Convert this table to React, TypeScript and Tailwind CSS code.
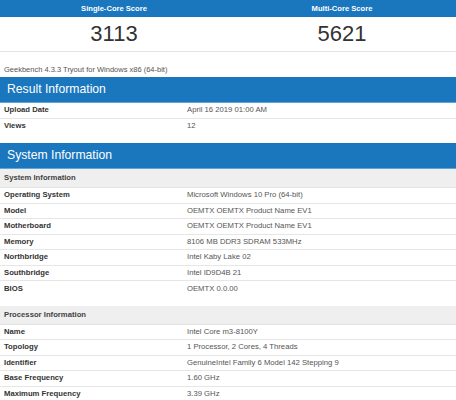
const blue = "bg-[#1a76bd]";

type Row = [string, string];

const resultRows: Row[] = [
  ["Upload Date", "April 16 2019 01:00 AM"],
  ["Views", "12"],
];

const systemRows: Row[] = [
  ["Operating System", "Microsoft Windows 10 Pro (64-bit)"],
  ["Model", "OEMTX OEMTX Product Name EV1"],
  ["Motherboard", "OEMTX OEMTX Product Name EV1"],
  ["Memory", "8106 MB DDR3 SDRAM 533MHz"],
  ["Northbridge", "Intel Kaby Lake 02"],
  ["Southbridge", "Intel ID9D4B 21"],
  ["BIOS", "OEMTX 0.0.00"],
];

const processorRows: Row[] = [
  ["Name", "Intel Core m3-8100Y"],
  ["Topology", "1 Processor, 2 Cores, 4 Threads"],
  ["Identifier", "GenuineIntel Family 6 Model 142 Stepping 9"],
  ["Base Frequency", "1.60 GHz"],
  ["Maximum Frequency", "3.39 GHz"],
];

const SectionBar = ({ title }: { title: string }) => (
  <div className={`${blue} h-[26px] flex items-center px-[7px] border-b border-[#5ea6dc]`}>
    <span className="text-white text-[12.2px] leading-none">{title}</span>
  </div>
);

const SubHeader = ({ title }: { title: string }) => (
  <div className="h-[19px] flex items-center px-[4px] bg-[#efefef] border-b border-[#e2e2e2]">
    <span className="font-bold text-[7.7px] text-[#444]">{title}</span>
  </div>
);

const InfoRows = ({ rows, h }: { rows: Row[]; h: string }) => (
  <div>
    {rows.map(([label, value], i) => (
      <div
        key={label}
        className={`flex items-center ${h} ${i < rows.length - 1 ? "border-b border-[#e6e6e6]" : ""}`}
      >
        <div className="w-[187px] pl-[4px] font-bold text-[7.7px] text-[#333]">{label}</div>
        <div className="text-[7.7px] text-[#555]">{value}</div>
      </div>
    ))}
  </div>
);

export default function App() {
  return (
    <div className="w-[456px] h-[400px] overflow-hidden bg-white font-['Liberation_Sans',Arial,sans-serif]">
      {/* Scores */}
      <div className={`${blue} h-[17px] grid grid-cols-2 items-center`}>
        <div className="text-center text-white font-bold text-[7.6px]">Single-Core Score</div>
        <div className="text-center text-white font-bold text-[7.6px]">Multi-Core Score</div>
      </div>
      <div className="h-[35px] grid grid-cols-2 items-center border-b border-[#e4e4e4]">
        <div className="text-center text-[22px] leading-none text-[#333]">3113</div>
        <div className="text-center text-[22px] leading-none text-[#333]">5621</div>
      </div>
      <div className="h-[25px] pt-[3px] pl-[4px]">
        <span className="text-[7.5px] text-[#555]">Geekbench 4.3.3 Tryout for Windows x86 (64-bit)</span>
      </div>

      {/* Result Information */}
      <SectionBar title="Result Information" />
      <InfoRows rows={resultRows} h="h-[15.5px]" />

      {/* System Information */}
      <div className="mt-[9px]">
        <SectionBar title="System Information" />
        <SubHeader title="System Information" />
        <InfoRows rows={systemRows} h="h-[15.5px]" />
      </div>

      <div className="mt-[9px]">
        <SubHeader title="Processor Information" />
        <InfoRows rows={processorRows} h="h-[15.5px]" />
      </div>
    </div>
  );
}
